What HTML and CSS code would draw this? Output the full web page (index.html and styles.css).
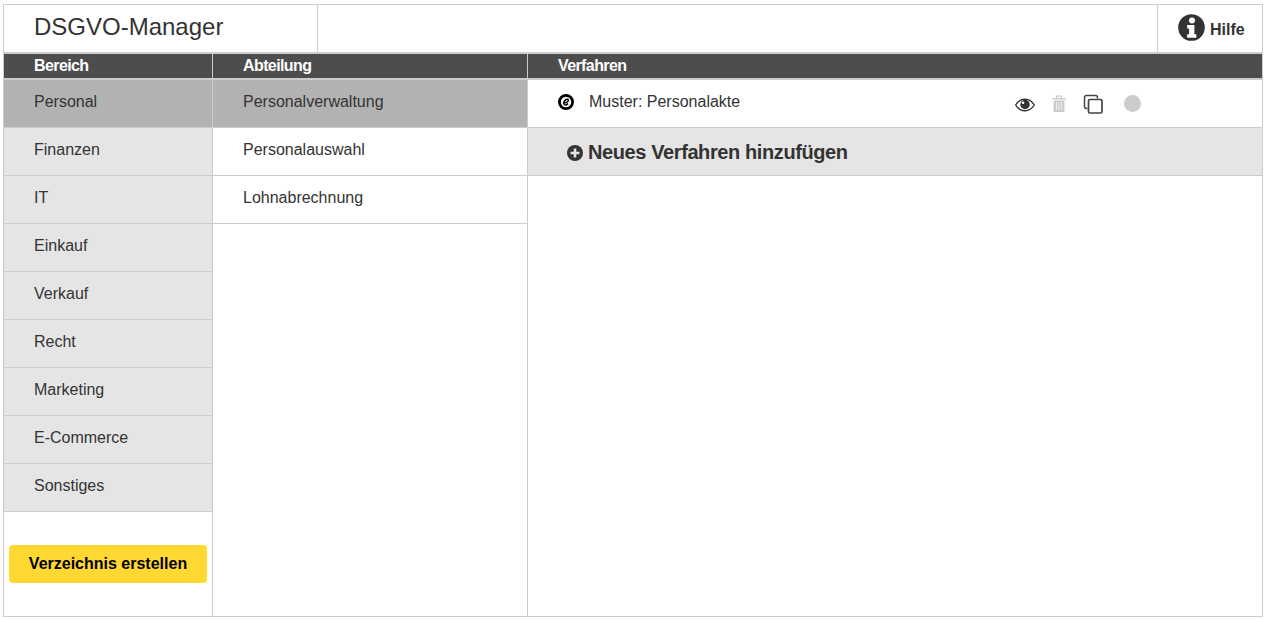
FILE: index.html
```html
<!DOCTYPE html>
<html lang="de">
<head>
<meta charset="utf-8">
<title>DSGVO-Manager</title>
<link rel="stylesheet" href="styles.css">
</head>
<body>
<div class="app">
  <header class="top">
    <div class="brand">DSGVO-Manager</div>
    <div class="spacer"></div>
    <div class="help">
      <svg class="help-icon" viewBox="0 0 28 28"><circle cx="14" cy="14" r="13.800" fill="#333"/><circle cx="14.500" cy="6.800" r="3.100" fill="#fff"/><path d="M9.500 11.500h7.500v9.500h2v3.500H9.500V21h2v-6h-2z" fill="#fff"/></svg>
      <span>Hilfe</span>
    </div>
  </header>
  <div class="bars">
    <div class="bar bar-a">Bereich</div>
    <div class="bar bar-b">Abteilung</div>
    <div class="bar bar-c">Verfahren</div>
  </div>
  <main class="cols">
    <nav class="col col-a">
      <div class="row grey active">Personal</div>
      <div class="row grey">Finanzen</div>
      <div class="row grey">IT</div>
      <div class="row grey">Einkauf</div>
      <div class="row grey">Verkauf</div>
      <div class="row grey">Recht</div>
      <div class="row grey">Marketing</div>
      <div class="row grey">E-Commerce</div>
      <div class="row grey">Sonstiges</div>
      <div class="cta-wrap"><button class="cta">Verzeichnis erstellen</button></div>
    </nav>
    <nav class="col col-b">
      <div class="row active">Personalverwaltung</div>
      <div class="row">Personalauswahl</div>
      <div class="row">Lohnabrechnung</div>
    </nav>
    <section class="col col-c">
      <div class="proc">
        <svg class="seal" viewBox="0 0 16 16"><circle cx="8" cy="8" r="6.600" fill="none" stroke="#000" stroke-width="2.800"/><path d="M5 9c2.200.2 5.200-.9 5.400-2.700.1-1.300-1.500-1.500-2.700-.6C6.100 7 5.300 9.400 6.300 10.500c.9.800 2.600.2 3.800-.9" fill="none" stroke="#000" stroke-width="1.500"/></svg>
        <span class="proc-name">Muster: Personalakte</span>
        <div class="tools">
          <svg class="eye" viewBox="0 0 20 14"><path d="M.7 7C3 3.200 6.300 1.300 10 1.300S17 3.200 19.300 7C17 10.800 13.700 12.700 10 12.700S3 10.800.7 7z" fill="none" stroke="#333" stroke-width="1.400"/><circle cx="10" cy="6.500" r="4.700" fill="#333"/><circle cx="8" cy="4.800" r="1.300" fill="#fff"/></svg>
          <svg class="trash" viewBox="0 0 16 17"><path d="M1 3h14v1.500H1z" fill="#ccc"/><path d="M5.500 3V1.200h5V3" fill="none" stroke="#ccc" stroke-width="1.200"/><path d="M2.500 5.500h11V17h-11z" fill="#ccc"/><path d="M5.500 7v8M8 7v8M10.500 7v8" stroke="#eee" stroke-width="1"/></svg>
          <svg class="copy" viewBox="0 0 20 20"><path d="M4.500 14.500h-1a2 2 0 0 1-2-2v-9a2 2 0 0 1 2-2h9a2 2 0 0 1 2 2v1" fill="none" stroke="#444" stroke-width="1.500"/><rect x="5.500" y="5.500" width="13.500" height="13.500" rx="1.500" fill="none" stroke="#444" stroke-width="1.700"/></svg>
          <span class="dot"></span>
        </div>
      </div>
      <div class="add">
        <svg class="plus" viewBox="0 0 16 16"><circle cx="8" cy="8" r="8" fill="#333"/><path d="M6.700 3.500h2.600v3.200h3.200v2.600H9.300v3.200H6.700V9.300H3.500V6.700h3.200z" fill="#e5e5e5"/></svg>
        <span>Neues Verfahren hinzufügen</span>
      </div>
    </section>
  </main>
</div>
</body>
</html>
```
FILE: styles.css
```css
* { box-sizing: border-box; }
html, body { height: 100%; }
body {
  margin: 0;
  padding: 4px 5px 3px 3px;
  background: #fff;
  font-family: "Liberation Sans", Arial, sans-serif;
  color: #333;
  overflow: hidden;
}
.app {
  height: 613px;
  border: 1px solid #ccc;
  display: flex;
  flex-direction: column;
}
.top {
  height: 48px;
  display: flex;
  flex: none;
  border-bottom: 1px solid #ccc;
}
.brand {
  width: 314px;
  padding-left: 30px;
  border-right: 1px solid #ccc;
  font-size: 24px;
  line-height: 44px;
  color: #333;
}
.spacer { flex: 1; }
.help {
  width: 105px;
  border-left: 1px solid #ccc;
  display: flex;
  align-items: center;
  padding-left: 20px;
  padding-bottom: 2px;
  gap: 5px;
  font-size: 16px;
  font-weight: bold;
}
.help-icon { width: 27px; height: 27px; }
.help span { position: relative; top: 2px; }
.bars {
  display: grid;
  grid-template-columns: 209px 315px 1fr;
  flex: none;
  height: 27px;
  border-top: 1px solid #ccc;
  background: #4d4d4d;
  border-bottom: 2px solid #ccc;
}
.bar {
  color: #fff;
  font-size: 16px;
  font-weight: bold;
  letter-spacing: -0.6px;
  line-height: 23px;
  padding-left: 30px;
}
.bar-a, .bar-b { border-right: 1px solid #ccc; }
.cols {
  display: grid;
  grid-template-columns: 209px 315px 1fr;
  flex: 1;
  min-height: 0;
}
.col { border-right: 1px solid #ccc; display: flex; flex-direction: column; }
.col-c { border-right: 0; }
.row {
  height: 48px;
  flex: none;
  padding-left: 30px;
  font-size: 16px;
  line-height: 43px;
  border-bottom: 1px solid #ccc;
  background: #fff;
}
.row.grey { background: #e5e5e5; }
.row.active { background: #b2b2b2; }
.cta-wrap { padding: 33px 5px 0 5px; }
.cta {
  display: block;
  width: 198px;
  height: 38px;
  border: 0;
  border-radius: 4px;
  background: #ffd832;
  color: #000;
  font-family: inherit;
  font-size: 16px;
  font-weight: bold;
  padding: 0;
}
.proc {
  height: 48px;
  flex: none;
  display: flex;
  align-items: center;
  padding-left: 30px;
  padding-bottom: 3px;
  border-bottom: 1px solid #ccc;
  font-size: 16px;
}
.seal { width: 16px; height: 16px; margin-right: 15px; }
.proc-name { width: 426px; }
.tools { display: flex; align-items: center; position: relative; top: 1px; }
.eye { width: 20px; height: 14px; margin-top: 3px; }
.trash { width: 16px; height: 17px; margin-left: 16px; }
.copy { width: 20px; height: 20px; margin-left: 16px; margin-top: 2px; }
.dot {
  width: 17px;
  height: 17px;
  border-radius: 50%;
  background: #ccc;
  margin-left: 21px;
}
.add {
  height: 48px;
  flex: none;
  display: flex;
  align-items: center;
  gap: 5px;
  padding-left: 39px;
  padding-top: 2px;
  background: #e5e5e5;
  border-bottom: 1px solid #ccc;
  font-size: 20px;
  font-weight: bold;
  letter-spacing: -0.4px;
}
.plus { width: 16px; height: 16px; }
```
